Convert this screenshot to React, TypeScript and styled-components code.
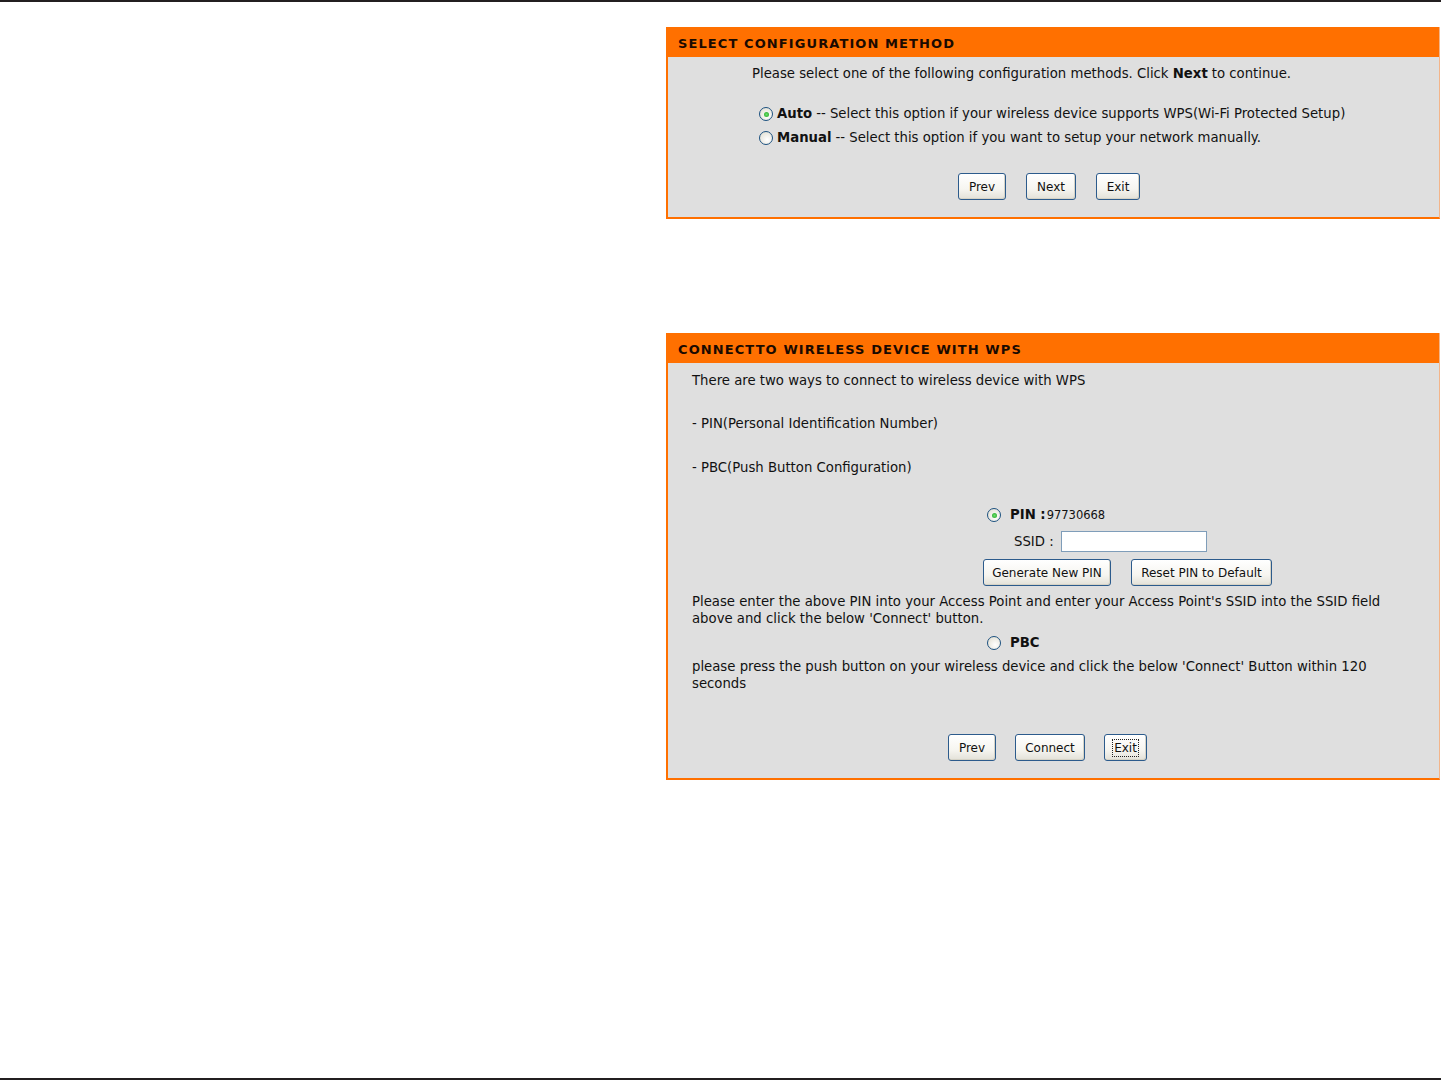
import { FC } from 'react';
import styled, { createGlobalStyle } from 'styled-components';

const GlobalStyle = createGlobalStyle`
  html, body {
    margin: 0;
    padding: 0;
    background: #ffffff;
  }
  body {
    font-family: "DejaVu Sans", Verdana, sans-serif;
    font-size: 13.25px;
    color: #111;
  }
`;

const Page = styled.div`
  width: 1441px;
  height: 1081px;
  box-sizing: border-box;
  border-top: 2px solid #231f20;
  display: flex;
  flex-direction: column;
`;

const Content = styled.div`
  flex: 1;
  padding: 25px 1px 0 666px;
  display: flex;
  flex-direction: column;
  gap: 114px;
`;

const BottomRule = styled.div`
  height: 2px;
  background: #231f20;
  margin-bottom: 1px;
`;

const Panel = styled.section`
  border-left: 2px solid #ff7000;
  border-right: 1px solid #f3b58a;
  border-bottom: 2px solid #ff7000;
  background: #dfdfdf;
`;

const PanelHeader = styled.h2`
  margin: 0 0 0 -2px;
  height: 30px;
  box-sizing: border-box;
  padding: 2px 0 0 12px;
  background: #ff7000;
  display: flex;
  align-items: center;
  font-family: "DejaVu Sans", Verdana, sans-serif;
  font-size: 13px;
  font-weight: bold;
  letter-spacing: 1.1px;
  color: #1a0a00;
`;

const PanelBody = styled.div<{ $pad: string }>`
  padding: ${(p) => p.$pad};
  display: flex;
  flex-direction: column;
`;

const Line = styled.div<{ $mt?: number }>`
  line-height: 17px;
  margin-top: ${(p) => p.$mt ?? 0}px;
`;

const Options = styled.div<{ $mt: number }>`
  margin-top: ${(p) => p.$mt}px;
`;

const OptionRow = styled.label`
  display: flex;
  align-items: center;
  line-height: 24px;
  height: 24px;
`;

const Radio = styled.span<{ $checked?: boolean; $ml: number; $mr?: number }>`
  width: 14px;
  height: 14px;
  border-radius: 50%;
  border: 1px solid #1c5180;
  background: radial-gradient(circle at 60% 65%, #ffffff 0%, #e8e6dc 70%, #d2d0c6 100%);
  box-sizing: border-box;
  margin: 0 ${(p) => p.$mr ?? 4}px 0 ${(p) => p.$ml}px;
  position: relative;
  flex-shrink: 0;

  &::after {
    content: '';
    display: ${(p) => (p.$checked ? 'block' : 'none')};
    position: absolute;
    left: 3.5px;
    top: 3.5px;
    width: 5px;
    height: 5px;
    border-radius: 50%;
    background: radial-gradient(circle, #6be06b 0%, #21a121 100%);
  }
`;

const Strong = styled.b<{ $mr?: number }>`
  font-weight: bold;
  font-size: 13.25px;
  margin-right: ${(p) => p.$mr ?? 4}px;
`;

const ButtonRow = styled.div<{ $mt: number; $gap: number; $pl?: number; $pr?: number }>`
  display: flex;
  justify-content: center;
  gap: ${(p) => p.$gap}px;
  margin-top: ${(p) => p.$mt}px;
  padding-left: ${(p) => p.$pl ?? 0}px;
  padding-right: ${(p) => p.$pr ?? 0}px;
`;

const Button = styled.button<{ $w: number; $focus?: boolean }>`
  width: ${(p) => p.$w}px;
  height: 27px;
  border: 1px solid #2c5b8c;
  border-radius: 3px;
  background: linear-gradient(#ffffff 0%, #f6f5f0 60%, #e3e1d8 100%);
  font-family: "DejaVu Sans", Verdana, sans-serif;
  font-size: 12px;
  color: #111;
  padding: 0;
  box-shadow: inset -1px -1px 0 #d6d3c6;
  cursor: pointer;

  span {
    padding: 1px 1px;
    outline: ${(p) => (p.$focus ? '1px dotted #222' : 'none')};
  }
`;

const Block = styled.div<{ $mt?: number }>`
  padding-left: 291px;
  margin-top: ${(p) => p.$mt ?? 0}px;
  display: flex;
  flex-direction: column;
`;

const PinNumber = styled.span`
  font-size: 11.5px;
`;

const SsidRow = styled.div`
  display: flex;
  align-items: center;
  padding-left: 31px;
  margin-top: 3px;
  height: 22px;
`;

const SsidInput = styled.input`
  width: 146px;
  height: 21px;
  box-sizing: border-box;
  border: 1px solid #7f9db9;
  margin-left: 7px;
  background: #fff;
`;

const LeftButtons = styled.div`
  display: flex;
  gap: 20px;
  margin-top: 7px;
`;

const App: FC = () => {
  return (
    <>
      <GlobalStyle />
      <Page>
        <Content>
          <Panel>
            <PanelHeader>SELECT CONFIGURATION METHOD</PanelHeader>
            <PanelBody $pad="8px 0 17px 84px">
              <Line>
                Please select one of the following configuration methods. Click{' '}
                <Strong>Next</Strong>to continue.
              </Line>
              <Options $mt={20}>
                <OptionRow>
                  <Radio $checked $ml={7} />
                  <Strong>Auto</Strong>-- Select this option if your wireless device supports
                  WPS(Wi-Fi Protected Setup)
                </OptionRow>
                <OptionRow>
                  <Radio $ml={7} />
                  <Strong>Manual</Strong>-- Select this option if you want to setup your network
                  manually.
                </OptionRow>
              </Options>
              <ButtonRow $mt={23} $gap={20} $pr={93}>
                <Button $w={48}>
                  <span>Prev</span>
                </Button>
                <Button $w={50}>
                  <span>Next</span>
                </Button>
                <Button $w={44}>
                  <span>Exit</span>
                </Button>
              </ButtonRow>
            </PanelBody>
          </Panel>

          <Panel>
            <PanelHeader>CONNECTTO WIRELESS DEVICE WITH WPS</PanelHeader>
            <PanelBody $pad="9px 40px 17px 24px">
              <Line>There are two ways to connect to wireless device with WPS</Line>
              <Line $mt={26}>- PIN(Personal Identification Number)</Line>
              <Line $mt={27}>- PBC(Push Button Configuration)</Line>
              <Block $mt={27}>
                <OptionRow>
                  <Radio $checked $ml={4} $mr={9} />
                  <Strong $mr={1}>PIN :</Strong>
                  <PinNumber>97730668</PinNumber>
                </OptionRow>
                <SsidRow>
                  SSID :<SsidInput />
                </SsidRow>
                <LeftButtons>
                  <Button $w={128}>
                    <span>Generate New PIN</span>
                  </Button>
                  <Button $w={141}>
                    <span>Reset PIN to Default</span>
                  </Button>
                </LeftButtons>
              </Block>
              <Line $mt={7}>
                Please enter the above PIN into your Access Point and enter your Access Point's SSID
                into the SSID field above and click the below 'Connect' button.
              </Line>
              <Block $mt={4}>
                <OptionRow>
                  <Radio $ml={4} $mr={9} />
                  <Strong>PBC</Strong>
                </OptionRow>
              </Block>
              <Line $mt={3}>
                please press the push button on your wireless device and click the below 'Connect'
                Button within 120 seconds
              </Line>
              <ButtonRow $mt={42} $gap={19} $pl={4}>
                <Button $w={48}>
                  <span>Prev</span>
                </Button>
                <Button $w={70}>
                  <span>Connect</span>
                </Button>
                <Button $w={43} $focus>
                  <span>Exit</span>
                </Button>
              </ButtonRow>
            </PanelBody>
          </Panel>
        </Content>
        <BottomRule />
      </Page>
    </>
  );
};

export default App;
